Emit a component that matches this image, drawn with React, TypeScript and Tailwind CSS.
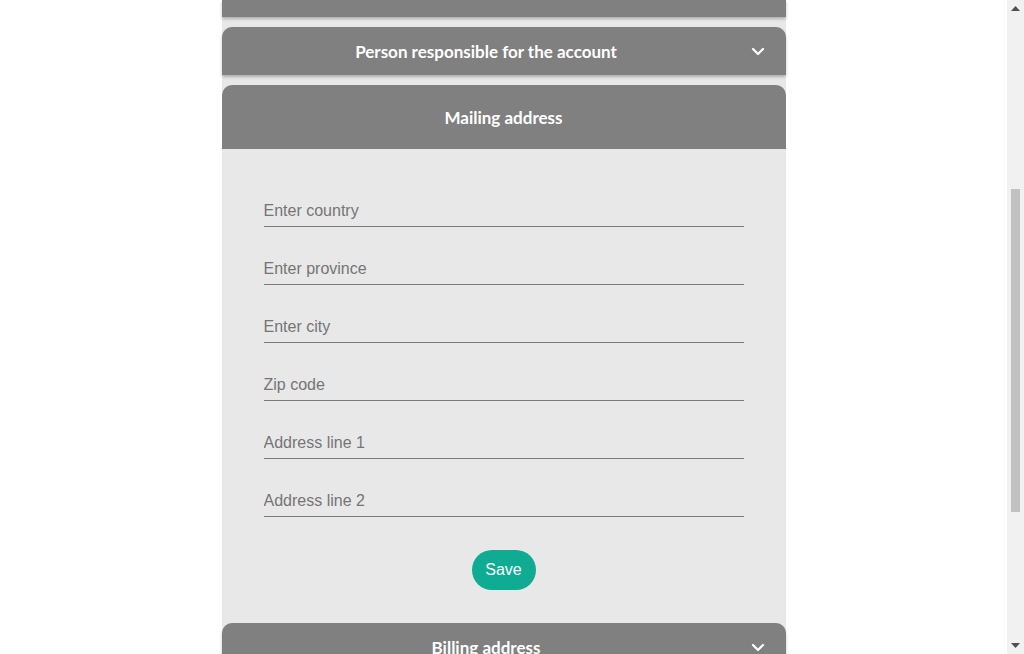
import React, { useState } from 'react';

const fields = [
  'Enter country',
  'Enter province',
  'Enter city',
  'Zip code',
  'Address line 1',
  'Address line 2',
];

const Chevron = () => (
  <svg width="14" height="9" viewBox="0 0 14 9" fill="none" stroke="white" strokeWidth="2.2" strokeLinecap="round" strokeLinejoin="round">
    <polyline points="2,2 7,7 12,2" />
  </svg>
);

const CollapsedHeader = ({ title }: { title: string }) => (
  <div className="flex h-12 items-center rounded-t-[10px] bg-[#808080] pr-[21px] shadow-[0_2px_3px_rgba(0,0,0,0.25)]">
    <div className="flex-1 text-center text-[17px] leading-none font-bold text-white [font-family:Lato,'Open_Sans',sans-serif]">
      {title}
    </div>
    <Chevron />
  </div>
);

export default function App() {
  const [values, setValues] = useState<string[]>(fields.map(() => ''));

  return (
    <div className="flex h-[654px] overflow-hidden bg-white">
      <div className="flex flex-1 justify-center">
        <div className="flex w-[564px] flex-col bg-[#e8e8e8]">
          {/* panel cut off by the scroll */}
          <div className="h-[17px] shrink-0 bg-[#808080] shadow-[0_2px_3px_rgba(0,0,0,0.25)]" />

          <div className="mt-[10px]">
            <CollapsedHeader title="Person responsible for the account" />
          </div>

          {/* Mailing address - open */}
          <div className="mt-[10px]">
            <div className="flex h-16 items-center justify-center rounded-t-[10px] bg-[#808080]">
              <span className="text-[17px] leading-none font-bold text-white [font-family:Lato,'Open_Sans',sans-serif]">
                Mailing address
              </span>
            </div>
            <form
              className="flex flex-col px-[42px] pt-[41px] pb-[32px]"
              onSubmit={(e) => e.preventDefault()}
            >
              <div className="flex flex-col gap-[21px]">
                {fields.map((f, i) => (
                  <input
                    key={f}
                    type="text"
                    placeholder={f}
                    value={values[i]}
                    onChange={(e) =>
                      setValues((prev) => prev.map((v, j) => (j === i ? e.target.value : v)))
                    }
                    className="h-[37px] w-full border-b border-[#7a7a7a] bg-transparent pt-[5px] text-[16px] text-[#333] outline-none placeholder:text-[#757575] [font-family:'Liberation_Sans',Arial,sans-serif]"
                  />
                ))}
              </div>
              <div className="mt-[33px] flex justify-center">
                <button
                  type="submit"
                  className="h-10 w-16 rounded-full bg-[#0fab92] text-[16px] text-white [font-family:'Liberation_Sans',Arial,sans-serif]"
                >
                  Save
                </button>
              </div>
            </form>
          </div>

          <div className="mt-px">
            <CollapsedHeader title="Billing address" />
          </div>
        </div>
      </div>

      {/* scrollbar */}
      <div className="flex w-[17px] shrink-0 flex-col items-center bg-[#f1f1f1]">
        <div className="flex h-[17px] w-full items-center justify-center">
          <svg width="9" height="5" viewBox="0 0 9 5"><polygon points="0,5 4.5,0 9,5" fill="#505050" /></svg>
        </div>
        <div className="h-[172px]" />
        <div className="h-[323px] w-[9px] bg-[#c1c1c1]" />
        <div className="flex-1" />
        <div className="flex h-[17px] w-full items-center justify-center">
          <svg width="9" height="5" viewBox="0 0 9 5"><polygon points="0,0 4.5,5 9,0" fill="#505050" /></svg>
        </div>
      </div>
    </div>
  );
}
